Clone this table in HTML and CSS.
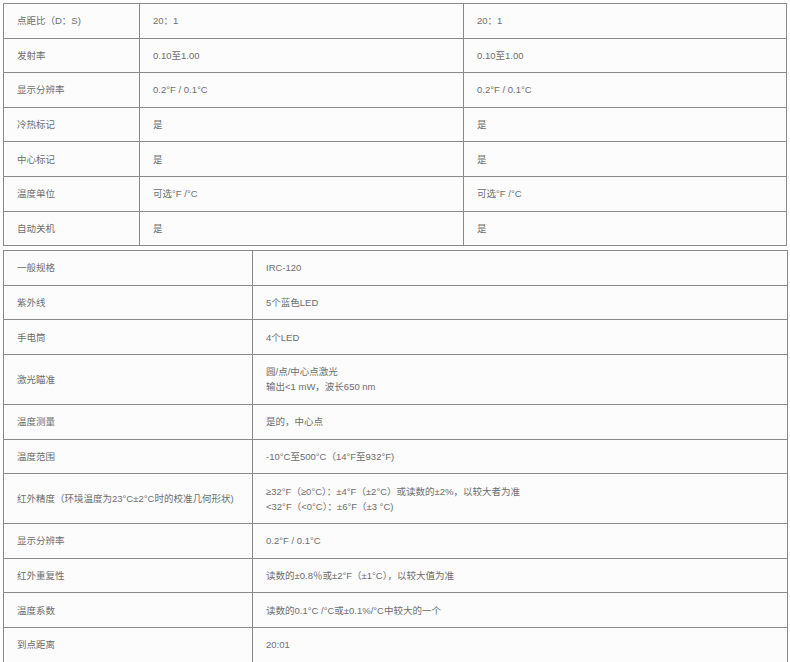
FILE: index.html
```html
<!DOCTYPE html>
<html lang="zh">
<head>
<meta charset="utf-8">
<link rel="stylesheet" href="styles.css">
</head>
<body>
<table class="spec spec-a">
  <colgroup><col class="a1"><col class="a2"><col class="a3"></colgroup>
  <tr><td>点距比（D：S)</td><td>20：1</td><td>20：1</td></tr>
  <tr><td>发射率</td><td>0.10至1.00</td><td>0.10至1.00</td></tr>
  <tr><td>显示分辨率</td><td>0.2°F / 0.1°C</td><td>0.2°F / 0.1°C</td></tr>
  <tr><td>冷热标记</td><td>是</td><td>是</td></tr>
  <tr><td>中心标记</td><td>是</td><td>是</td></tr>
  <tr><td>温度单位</td><td>可选°F /°C</td><td>可选°F /°C</td></tr>
  <tr><td>自动关机</td><td>是</td><td>是</td></tr>
</table>
<table class="spec spec-b">
  <colgroup><col class="b1"><col class="b2"></colgroup>
  <tr><td>一般规格</td><td>IRC-120</td></tr>
  <tr><td>紫外线</td><td>5个蓝色LED</td></tr>
  <tr><td>手电筒</td><td>4个LED</td></tr>
  <tr class="tall"><td>激光瞄准</td><td>圆/点/中心点激光<br>输出&lt;1 mW，波长650 nm</td></tr>
  <tr><td>温度测量</td><td>是的，中心点</td></tr>
  <tr><td>温度范围</td><td>-10°C至500°C（14°F至932°F)</td></tr>
  <tr class="tall"><td class="nowrap">红外精度（环境温度为23°C±2°C时的校准几何形状)</td><td>≥32°F（≥0°C）：±4°F（±2°C）或读数的±2%，以较大者为准<br>&lt;32°F（&lt;0°C）：±6°F（±3 °C)</td></tr>
  <tr><td>显示分辨率</td><td>0.2°F / 0.1°C</td></tr>
  <tr><td>红外重复性</td><td>读数的±0.8％或±2°F（±1°C），以较大值为准</td></tr>
  <tr><td>温度系数</td><td>读数的0.1°C /°C或±0.1%/°C中较大的一个</td></tr>
  <tr><td>到点距离</td><td>20:01</td></tr>
</table>
</body>
</html>
```
FILE: styles.css
```css
html, body {
  margin: 0;
  background: #ffffff;
}
body {
  padding: 3px 3px 0 3px;
  font-family: "Liberation Sans", "Noto Sans CJK SC", sans-serif;
  font-size: 9.5px;
  color: #6e6e6e;
}
.spec {
  border-collapse: collapse;
  table-layout: fixed;
  background: #fcfcfc;
}
.spec td {
  border: 1px solid #8a8a8a;
  padding: 0 13px;
  height: 34.6px;
  line-height: 15px;
  vertical-align: middle;
  box-sizing: border-box;
}
.spec tr.tall td {
  height: 50px;
}
.spec td.nowrap {
  white-space: nowrap;
}
.spec-a {
  width: 783px;
}
.spec-a .a1 { width: 136px; }
.spec-a .a2 { width: 324px; }
.spec-a .a3 { width: 323px; }
.spec-b {
  width: 784px;
  margin-top: 4px;
}
.spec-b .b1 { width: 249px; }
.spec-b .b2 { width: 535px; }
```
